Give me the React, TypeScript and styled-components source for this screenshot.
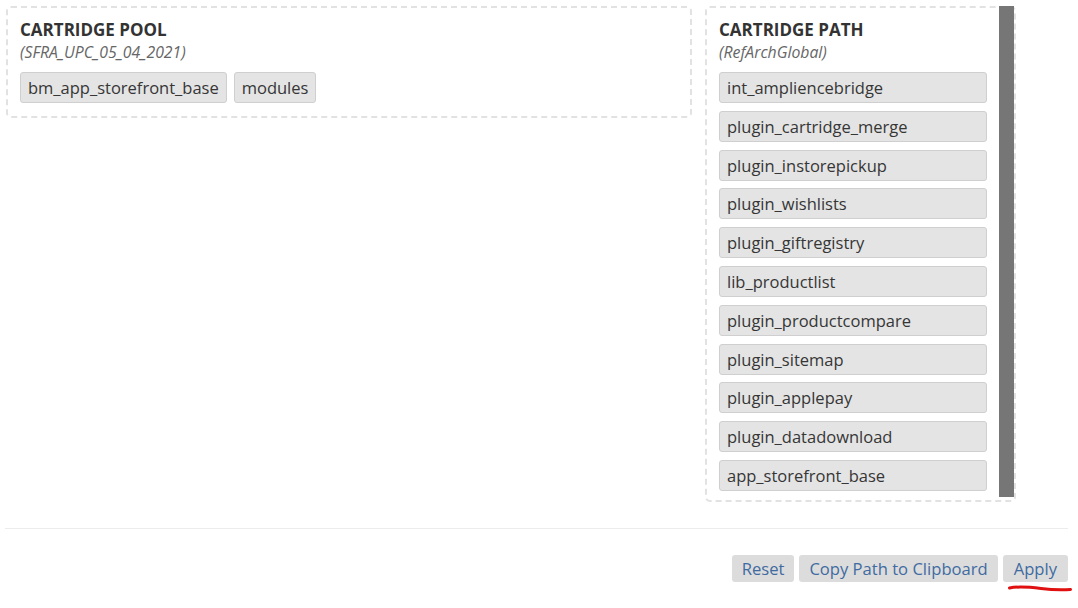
import React from "react";
import styled, { createGlobalStyle } from "styled-components";

const Global = createGlobalStyle`
  html, body { margin: 0; padding: 0; background: #fff; }
  body { font-family: "Open Sans", "Noto Sans", sans-serif; color: #333; }
`;

const Page = styled.div`
  padding: 6px 10px 0 5px;
  width: 1063px;
`;

const TopRow = styled.div`
  display: flex;
  align-items: flex-start;
  gap: 13px;
  padding: 0 52px 0 1px;
`;

const Panel = styled.div<{ $grow?: boolean }>`
  border: 2px dashed #e2e2e2;
  border-radius: 5px;
  box-sizing: border-box;
  ${(p) => (p.$grow ? "flex: 1;" : "width: 311px;")}
  display: flex;
`;

const PanelBody = styled.div<{ $pb: number }>`
  flex: 1;
  padding: 11px 12px ${(p) => p.$pb}px 12px;
`;

const Title = styled.div`
  font-weight: 700;
  font-size: 17px;
  line-height: 22px;
  color: #333;
`;

const Sub = styled.div`
  font-style: italic;
  font-size: 15.8px;
  line-height: 22px;
  color: #666;
  margin-bottom: 9px;
`;

const ChipWrap = styled.div<{ $column?: boolean }>`
  display: flex;
  flex-direction: ${(p) => (p.$column ? "column" : "row")};
  gap: ${(p) => (p.$column ? "7.8px" : "7px")};
  flex-wrap: wrap;
`;

const Chip = styled.div`
  background: #e4e4e4;
  border: 1px solid #cfcfcf;
  border-radius: 3px;
  height: 31px;
  box-sizing: border-box;
  padding: 0 7px;
  display: flex;
  align-items: center;
  font-size: 16.5px;
  color: #363636;
  white-space: nowrap;
  flex-shrink: 0;
`;

const Scrollbar = styled.div`
  width: 15px;
  background: #767676;
  margin: -2px 0 3px 0;
`;

const Divider = styled.hr`
  border: none;
  border-top: 1px solid #ececec;
  margin: 26px 0 0 0;
`;

const Actions = styled.div`
  display: flex;
  justify-content: flex-end;
  align-items: flex-start;
  gap: 5px;
  margin-top: 26px;
`;

const Btn = styled.button`
  border: none;
  background: #dcdcdc;
  border-radius: 3px;
  height: 27px;
  padding: 0 10px;
  font-family: "Open Sans", "Noto Sans", sans-serif;
  font-size: 16.6px;
  color: #3f6ba1;
  cursor: pointer;
`;

const WideBtn = styled(Btn)`
  padding: 0 11px;
`;

const Marked = styled.div`
  display: flex;
  flex-direction: column;
  align-items: flex-start;
`;

const Scribble = styled.svg`
  display: block;
  margin: 3px -10px 0 5px;
  overflow: visible;
`;

const pathItems = [
  "int_ampliencebridge",
  "plugin_cartridge_merge",
  "plugin_instorepickup",
  "plugin_wishlists",
  "plugin_giftregistry",
  "lib_productlist",
  "plugin_productcompare",
  "plugin_sitemap",
  "plugin_applepay",
  "plugin_datadownload",
  "app_storefront_base",
];

export default function App() {
  return (
    <>
      <Global />
      <Page>
        <TopRow>
          <Panel $grow>
            <PanelBody $pb={13}>
              <Title>CARTRIDGE POOL</Title>
              <Sub>(SFRA_UPC_05_04_2021)</Sub>
              <ChipWrap>
                <Chip>bm_app_storefront_base</Chip>
                <Chip>modules</Chip>
              </ChipWrap>
            </PanelBody>
          </Panel>
          <Panel>
            <PanelBody $pb={9}>
              <Title>CARTRIDGE PATH</Title>
              <Sub>(RefArchGlobal)</Sub>
              <ChipWrap $column>
                {pathItems.map((it) => (
                  <Chip key={it}>{it}</Chip>
                ))}
              </ChipWrap>
            </PanelBody>
            <Scrollbar />
          </Panel>
        </TopRow>
        <Divider />
        <Actions>
          <Btn>Reset</Btn>
          <Btn>Copy Path to Clipboard</Btn>
          <Marked>
            <WideBtn>Apply</WideBtn>
            <Scribble width="64" height="7" viewBox="0 0 64 7">
              <path
                d="M1.5 3 C 11 1, 21 2, 33 3.5 S 54 5, 62.5 4.5"
                stroke="#e01010"
                strokeWidth="3"
                fill="none"
                strokeLinecap="round"
              />
            </Scribble>
          </Marked>
        </Actions>
      </Page>
    </>
  );
}
